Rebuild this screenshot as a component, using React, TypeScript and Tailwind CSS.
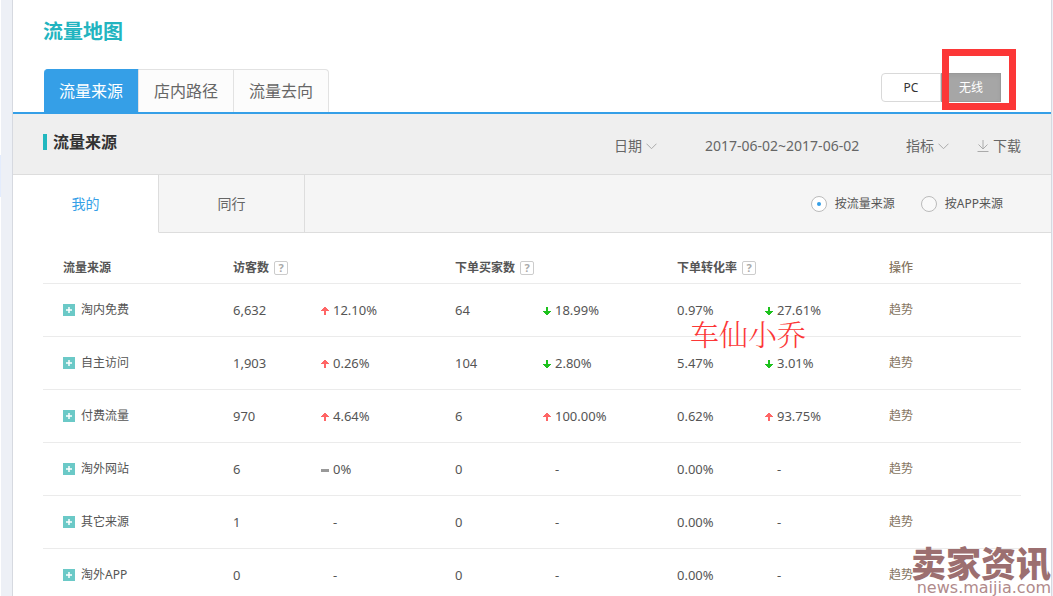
import { useState } from 'react'

type Trend = 'up' | 'down' | 'flat' | 'none'

interface Metric {
  value: string
  trend: Trend
  change: string
}

interface Row {
  name: string
  metrics: Metric[]
}

const m = (value: string, trend: Trend = 'none', change = '-'): Metric => ({ value, trend, change })

const rows: Row[] = [
  { name: '淘内免费', metrics: [m('6,632', 'up', '12.10%'), m('64', 'down', '18.99%'), m('0.97%', 'down', '27.61%')] },
  { name: '自主访问', metrics: [m('1,903', 'up', '0.26%'), m('104', 'down', '2.80%'), m('5.47%', 'down', '3.01%')] },
  { name: '付费流量', metrics: [m('970', 'up', '4.64%'), m('6', 'up', '100.00%'), m('0.62%', 'up', '93.75%')] },
  { name: '淘外网站', metrics: [m('6', 'flat', '0%'), m('0'), m('0.00%')] },
  { name: '其它来源', metrics: [m('1'), m('0'), m('0.00%')] },
  { name: '淘外APP', metrics: [m('0'), m('0'), m('0.00%')] },
]

const tabs = ['流量来源', '店内路径', '流量去向']
const columns = ['访客数', '下单买家数', '下单转化率']

function TrendIcon({ trend }: { trend: Trend }) {
  return (
    <svg className="w-2 h-2 mt-px mr-1 shrink-0" viewBox="0 0 8 8" shapeRendering="crispEdges" aria-hidden="true">
      {trend === 'up' && <path fill="#ff6666" d="M3 0h2v1h1v1h1v1h1v1H5v4H3V4H0V3h1V2h1V1h1z" />}
      {trend === 'down' && <path fill="#1dc11d" d="M3 8h2V7h1V6h1V5h1V4H5V0H3v4H0v1h1v1h1v1h1z" />}
      {trend === 'flat' && <path fill="#999999" d="M0 3h8v3H0z" />}
    </svg>
  )
}

function Dropdown({ label }: { label: string }) {
  return (
    <div className="relative">
      <select aria-label={label} className="appearance-none bg-transparent pr-[15px] outline-none">
        <option>{label}</option>
      </select>
      <svg
        className="absolute right-0 top-[7px] w-[11px] h-[7px] pointer-events-none"
        viewBox="0 0 11 7"
        fill="none"
        stroke="#aaaaaa"
        aria-hidden="true"
      >
        <path d="M0.5 0.7 5.5 5.7 10.5 0.7" />
      </svg>
    </div>
  )
}

export default function App() {
  const [tab, setTab] = useState('流量来源')
  const [device, setDevice] = useState('无线')
  const [owner, setOwner] = useState('我的')
  const [groupBy, setGroupBy] = useState('按流量来源')

  return (
    <div className="relative flex h-screen overflow-hidden bg-[#edf0f6] pr-px font-['Noto_Sans','Noto_Sans_CJK_SC',sans-serif] text-[#555555]">
      <div className="w-px shrink-0 bg-white pt-[155px]">
        <div className="h-[42px] bg-[#e3ecfd]" />
      </div>

      <main className="ml-[11px] grow border-x border-[#d6d9e0] bg-white">
        <header className="flex justify-between h-[114px] border-b-2 border-[#359fe7] pl-[30px] pr-[50px]">
          <div className="flex flex-col justify-between">
            <h1 className="pt-4 text-xl leading-8 font-bold text-[#22b4c0]">流量地图</h1>
            <nav className="flex pl-px text-base">
              {tabs.map((t, i) => (
                <button
                  key={t}
                  onClick={() => setTab(t)}
                  className={`h-[43px] px-[15px] border-t border-r ${i === 0 ? 'rounded-tl' : ''} ${
                    i === tabs.length - 1 ? 'rounded-tr' : ''
                  } ${
                    tab === t
                      ? 'bg-[#359fe7] border-t-[#359fe7] border-r-[#e2e2e2] text-white'
                      : 'bg-[#fcfcfc] border-[#e2e2e2] text-[#666666]'
                  }`}
                >
                  {t}
                </button>
              ))}
            </nav>
          </div>

          <div className="relative flex self-end mb-[10px] text-xs">
            {['PC', '无线'].map((d) => (
              <button
                key={d}
                onClick={() => setDevice(d)}
                className={`h-[29px] w-[60px] border first:rounded-l-sm last:rounded-r-sm ${
                  device === d
                    ? 'bg-[#a6a6a6] border-[#999999] text-white inset-shadow-sm'
                    : 'bg-white border-[#d9d9d9] text-[#333333]'
                }`}
              >
                {d}
              </button>
            ))}
            <div className="absolute -right-[15px] -top-6 h-[61px] w-[74px] border-[7px] border-[#fc3737] pointer-events-none" />
          </div>
        </header>

        <section className="flex items-center justify-between h-[61px] border-b border-[#dddddd] bg-[#efefef] px-[30px]">
          <div className="flex items-center gap-[6px] pb-1">
            <span className="h-4 w-1 bg-[#22b8bf]" />
            <h2 className="text-base font-bold text-[#333333]">流量来源</h2>
          </div>
          <div className="flex items-center pt-1 text-sm text-[#666666]">
            <Dropdown label="日期" />
            <span className="ml-12 mr-11 w-[157px]">2017-06-02~2017-06-02</span>
            <Dropdown label="指标" />
            <button className="flex items-center gap-1 ml-7">
              <svg className="w-3 h-3" viewBox="0 0 12 12" fill="none" stroke="#aaaaaa" aria-hidden="true">
                <path d="M6 0v9M1.5 4.5 6 9l4.500-4.500M0.500 11.500h11" />
              </svg>
              下载
            </button>
          </div>
        </section>

        <section className="flex h-[58px] bg-[#f5f5f5]">
          {['我的', '同行'].map((o) => (
            <button
              key={o}
              onClick={() => setOwner(o)}
              className={`w-[146px] border-r border-b border-[#dddddd] text-sm ${
                owner === o ? 'bg-white border-b-white text-[#359fe7]' : 'text-[#666666]'
              }`}
            >
              {o}
            </button>
          ))}
          <div className="flex grow items-center justify-end gap-[26px] border-b border-[#dddddd] pr-12 text-xs">
            {['按流量来源', '按APP来源'].map((g) => (
              <label key={g} className="flex items-center gap-2">
                <input
                  type="radio"
                  name="group"
                  checked={groupBy === g}
                  onChange={() => setGroupBy(g)}
                  className="grid place-content-center appearance-none w-4 h-4 rounded-full border border-[#bbbbbb] bg-[#f9f9f9] checked:bg-white checked:before:block before:w-1 before:h-1 before:rounded-full checked:before:bg-[#359fe7]"
                />
                {g}
              </label>
            ))}
          </div>
        </section>

        <section className="relative px-[30px]">
          <table className="w-full table-fixed text-left text-xs">
            <colgroup>
              <col className="w-[170px]" />
              <col className="w-[222px]" />
              <col className="w-[222px]" />
              <col className="w-[212px]" />
              <col />
            </colgroup>
            <thead>
              <tr className="h-[50px] border-b border-[#ebebeb]">
                <th className="pl-5 pt-5">流量来源</th>
                {columns.map((c) => (
                  <th key={c} className="pl-5 pt-5">
                    <div className="flex items-center gap-[5px]">
                      {c}
                      <button
                        aria-label={`${c}说明`}
                        className="grid place-content-center w-[14px] h-[14px] rounded-[2px] border border-[#cccccc] text-[11px] leading-3 text-[#aaaaaa]"
                      >
                        ?
                      </button>
                    </div>
                  </th>
                ))}
                <th className="pl-5 pt-5 font-medium text-[#85755f]">操作</th>
              </tr>
            </thead>
            <tbody>
              {rows.map((row) => (
                <tr key={row.name} className="h-[53px] border-b border-[#ebebeb]">
                  <td className="pl-5">
                    <div className="flex items-center gap-[6px]">
                      <button aria-label={`展开${row.name}`} className="w-3 h-3 bg-[#6bc9c7]">
                        <svg className="w-3 h-3" viewBox="0 0 12 12" stroke="#ffffff" strokeWidth="1.500" aria-hidden="true">
                          <path d="M6 3v6M3 6h6" />
                        </svg>
                      </button>
                      {row.name}
                    </div>
                  </td>
                  {row.metrics.map((metric, i) => (
                    <td key={i} className="pl-5 pt-[2px] text-[13px]">
                      <div className="flex items-center">
                        <span className="w-[88px]">{metric.value}</span>
                        <TrendIcon trend={metric.trend} />
                        {metric.change}
                      </div>
                    </td>
                  ))}
                  <td className="pl-5">
                    <a href="#trend" className="text-[#85755f]">
                      趋势
                    </a>
                  </td>
                </tr>
              ))}
            </tbody>
          </table>
          <p className="absolute left-[677px] top-[84px] text-[29px] leading-[34px] font-light text-[#fc3737] font-['Noto_Serif_CJK_SC','Noto_Sans_CJK_SC',serif] pointer-events-none">
            车仙小乔
          </p>
        </section>
      </main>

      {/* site watermark */}
      <div className="absolute right-[2px] bottom-0 text-right text-[#9c6f70] pointer-events-none">
        <div className="text-[35px] leading-9 font-black font-['Noto_Sans_CJK_SC',sans-serif]">卖家资讯</div>
        <div className="text-base leading-4 font-['DejaVu_Sans',sans-serif] text-[#b08a8b]">news.maijia.com</div>
      </div>
    </div>
  )
}
